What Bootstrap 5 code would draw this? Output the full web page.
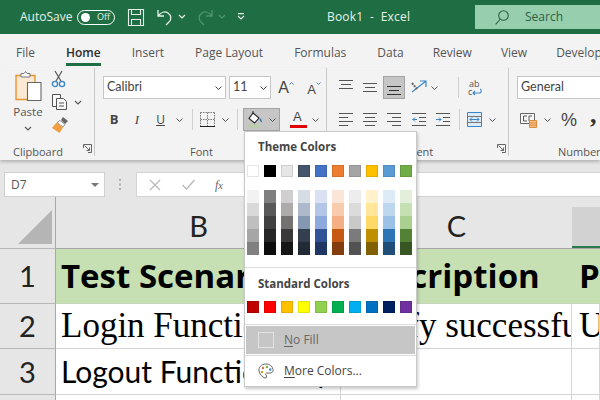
<!DOCTYPE html>
<html lang="en">
<head>
  <title>Book1 - Excel</title>
  <meta charset="utf-8">
  <meta name="viewport" content="width=device-width, initial-scale=1">
  <link href="https://cdn.jsdelivr.net/npm/bootstrap@5.3.1/dist/css/bootstrap.min.css" rel="stylesheet">
  <script src="https://cdn.jsdelivr.net/npm/bootstrap@5.3.1/dist/js/bootstrap.bundle.min.js"></script>
  <style>
    html, body { height: 400px; overflow: hidden; }
    body { font-family: "Open Sans", "Noto Sans", sans-serif; font-size: 12px; color: #444; background: #fff; position: relative; }
    svg { display: block; flex: none; overflow: visible; }

    /* small spacing helpers, the ribbon is all little offsets */
    .ml2 { margin-left: 2px; } .ml3 { margin-left: 3px; } .ml5 { margin-left: 5px; } .ml6 { margin-left: 6px; }
    .ml7 { margin-left: 7px; } .ml9 { margin-left: 9px; } .ml10 { margin-left: 10px; } .ml11 { margin-left: 11px; }
    .ml13 { margin-left: 13px; } .ml20 { margin-left: 20px; } .ml22 { margin-left: 22px; }
    .mr5 { margin-right: 5px; } .mr6 { margin-right: 6px; }
    .mt1 { margin-top: 1px; } .mt3 { margin-top: 3px; } .mt6 { margin-top: 6px; } .mt7 { margin-top: 7px; } .mt9 { margin-top: 9px; }
    .mt10 { margin-top: 10px; } .mt11 { margin-top: 11px; } .mt12 { margin-top: 12px; } .mt13 { margin-top: 13px; } .up6 { margin-top: -6px; } .down6 { margin-top: 6px; } .up9 { margin-top: -9px; }
    .w14 { width: 14px; } .w15 { width: 15px; } .w16 { width: 16px; } .w20 { width: 20px; } .w22 { width: 22px; } .w23 { width: 23px; } .w24 { width: 24px; }
    .w26 { width: 26px; } .w28 { width: 28px; } .w30 { width: 30px; } .w37 { width: 37px; }

    /* title bar */
    .title-bar { height: 34px; background: #1f6e43; color: #e6f1ea; padding-left: 20px; }
    .title-bar .auto { width: 57px; font-size: 12px; }
    .toggle { width: 38px; height: 15px; border: 1px solid #fff; border-radius: 8px; font-size: 9px; padding: 0 4px 0 3px; margin-right: 13px; }
    .knob { width: 9px; height: 9px; border-radius: 50%; background: #fff; }
    .book { width: 148px; margin-left: 82px; font-size: 12px; letter-spacing: .2px; }
    .search-box { width: 125px; height: 24px; background: #97cfae; color: #2f5f45; font-size: 12px; padding-left: 20px; gap: 16px; }

    /* tabs */
    .tab-row { height: 34px; background: #f3f3f3; font-size: 12px; color: #555; padding: 4px 0 0 16px; gap: 31px; white-space: nowrap; }
    .tab-item { flex: none; height: 30px; line-height: 30px; position: relative; }
    .tab-tight { margin-left: -2px; }
    .tab-on { color: #2c2c2c; font-weight: 600; }
    .tab-on::after { content: ""; position: absolute; left: 0; right: 0; bottom: 2px; height: 3px; background: #1f6e43; }

    /* ribbon */
    .ribbon { height: 92px; background: #f3f3f3; box-shadow: 0 2px 3px rgba(0,0,0,.22); position: relative; z-index: 1; }
    .rgroup { flex: none; height: 88px; border-right: 1px solid #c8c8c8; position: relative; padding-top: 8px; }
    .rg-clip { width: 95px; padding-top: 0; }
    .rg-font { width: 232px; }
    .rg-align { width: 182px; }
    .rg-num { flex: 1 1 auto; min-width: 0; padding: 8px 0 0 8px; }
    .rrow { display: flex; align-items: center; height: 23px; }
    .rpad8 { padding-left: 8px; }
    .rpad12 { padding-left: 12px; }
    .rpad3 { padding-left: 3px; }
    .rlabel { font-size: 11px; color: #555; text-align: center; line-height: 14px; margin-top: 14px; white-space: nowrap; }
    .lab-clip { padding-right: 18px; margin-top: 7px; }
    .lab-font { padding-right: 18px; }
    .lab-align { text-align: left; padding-left: 54px; }
    .lab-num { text-align: left; padding-left: 41px; }
    .launcher { position: absolute; bottom: 3px; right: 2px; }
    .ibox { flex: none; display: flex; align-items: center; justify-content: center; height: 23px; }
    .combo { flex: none; height: 23px; background: #fff; border: 1px solid #c6c6c6; color: #444; font-size: 12.5px; padding: 0 3px; display: flex; align-items: center; justify-content: space-between; font-family: "Lato", sans-serif; }
    .combo-font { width: 123px; }
    .combo-size { width: 42px; margin-left: 3px; }
    .combo-fmt { width: 110px; border-right: 0; }
    .vsep { flex: none; width: 1px; height: 21px; background: #d0d0d0; }
    .on-grey { background: #c6c6c6; border: 1px solid #a3a3a3; }
    .glyph { font-family: "Liberation Sans", sans-serif; color: #444; line-height: 1; }
    .g-big { font-size: 16px; }
    .g-small { font-size: 13px; margin-top: 3px; }
    .g-bold { font-family: "Open Sans", sans-serif; font-weight: 700; font-size: 13px; }
    .g-ital { font-family: "Liberation Serif", serif; font-style: italic; font-size: 13px; }
    .g-und { font-family: "Open Sans", sans-serif; font-size: 12px; }
    .g-pct { font-size: 18px; width: 29px; margin-left: 10px; }
    .g-comma { font-family: "Liberation Serif", serif; font-weight: 700; font-size: 26px; line-height: 14px; color: #333; height: 23px; }
    .fontcol { padding-left: 3px; }
    .fontcol .glyph { font-size: 13px; margin: -6px -3px 0 -14px; width: 11px; }
    .fillbtn { width: 37px; gap: 6px; }
    .wrapbtn { flex-direction: column; align-items: flex-start; width: 26px; font-size: 9px; line-height: 8px; color: #555; }
    .wrapbtn .ab { padding-left: 1px; }
    .paste-area { height: 70px; padding-top: 3px; }
    .paste-col { width: 38px; margin-left: 9px; }
    .paste-word { font-size: 11.5px; line-height: 14px; color: #555; margin-top: 3px; }
    .clip-col { width: 38px; margin-left: 5px; }

    /* formula bar */
    .fbar { height: 37px; background: #e6e6e6; padding: 12px 0 0 4px; }
    .namebox { width: 101px; height: 25px; background: #fff; border: 1px solid #d0d0d0; padding: 0 5px 0 6px; color: #555; font-size: 12px; }
    .fdots { width: 31px; }
    .fbox { height: 25px; background: #fff; border: 1px solid #d4d4d4; border-right: 0; }
    .fx { margin-left: 20px; font-family: "Liberation Serif", serif; font-style: italic; font-size: 12px; color: #666; }

    /* sheet */
    .sheet { display: grid; grid-template-columns: 56px 285px 231px 1fr; grid-template-rows: 52px 55px 45px 46px 20px; }
    .cell { overflow: hidden; white-space: nowrap; border-right: 1px solid #d4d4d4; border-bottom: 1px solid #d4d4d4; color: #000; display: flex; align-items: center; padding-left: 5px; }
    .hcol { background: #e6e6e6; border-right: 0; border-bottom: 1px solid #a8a8a8; align-items: flex-end; justify-content: center; padding: 0 0 3px; font-family: "Lato", sans-serif; font-size: 29px; line-height: 38px; color: #222; }
    .hrow { background: #e6e6e6; border-right: 1px solid #a8a8a8; border-bottom: 1px solid #b8b8b8; justify-content: center; padding: 0; font-family: "Lato", sans-serif; font-size: 29px; color: #222; }
    .hcorner { align-items: flex-end; padding: 0 3px 4px 0; justify-content: flex-end; }
    .hsel-wrap { background: #e6e6e6; padding-top: 10px; overflow: hidden; border-bottom: 1px solid #a8a8a8; }
    .hsel { background: #d2d2d2; height: 41px; border-bottom: 2px solid #2d7a4f; }
    .hdr-cell { background: #c6e0b4; font-family: "Open Sans", sans-serif; font-weight: 700; font-size: 33px; border-right-color: #c6e0b4; border-bottom-color: #c6d6bc; }
    .desc-cell { padding-left: 9px; }
    .verify-cell { padding-left: 8px; }
    .d-cell { padding-left: 7px; }
    .serif-cell { font-family: "Liberation Serif", serif; font-size: 35px; }
    .calibri-cell { font-family: "Lato", sans-serif; font-size: 30px; }

    /* fill colour menu */
    .fill-menu { position: absolute; left: 244px; top: 131px; width: 173px; height: 256px; background: #fff; border: 1px solid #c9c9c9; box-shadow: 1px 2px 3px rgba(0,0,0,.22); z-index: 5; color: #444; }
    .mhead { font-weight: 700; font-size: 11.5px; line-height: 16px; padding: 8px 0 0 13px; color: #444; }
    .mhead-first { padding-top: 7px; }
    .swatches { display: grid; grid-template-columns: repeat(10, 12px); column-gap: 5px; padding-left: 2px; }
    .swatch { height: 12px; border: 1px solid rgba(0,0,0,.1); }
    .tint { height: 13px; }
    .mline { height: 1px; background: #dcdcdc; }
    .mitem { height: 28px; margin: 1px 1px 0; padding-left: 12px; gap: 10px; font-size: 12px; color: #444; }
    .mitem u { text-underline-offset: 2px; }
    .mitem-on { background: #c6c6c6; color: #666; }
    .nofill { width: 16px; height: 16px; border: 1px solid #e2e2e2; }
  </style>
</head>
<body>

<!-- title bar -->
<div class="title-bar d-flex align-items-center">
  <div class="auto">AutoSave</div>
  <div class="toggle d-flex align-items-center justify-content-between"><span class="knob"></span><span>Off</span></div>
  <svg width="16" height="17" viewBox="0 0 16 17" fill="none" stroke="#e6f1ea" stroke-width="1.1"><path d="M.5.5h15v16H.5zM3.5.5v5h9v-5M3.5 16.5v-6h9v6"/></svg>
  <svg class="ml13" width="16" height="17" viewBox="0 0 16 17" fill="none" stroke="#e6f1ea" stroke-width="1.3"><path d="M1 1v6h6M1 7c3-4 7-5 10-3s4 6 1 9l-3 3"/></svg>
  <svg width="24" height="6" viewBox="0 0 24 6" fill="none" stroke="#e6f1ea" stroke-width="1.2"><path d="M6 1l3 3 3-3"/></svg>
  <svg width="16" height="17" viewBox="0 0 16 17" fill="none" stroke="#4f9470" stroke-width="1.3"><path d="M15 1v6H9M15 7c-3-4-7-5-10-3S1 10 4 13l3 3"/></svg>
  <svg width="24" height="6" viewBox="0 0 24 6" fill="none" stroke="#4f9470" stroke-width="1.2"><path d="M6 1l3 3 3-3"/></svg>
  <svg width="8" height="8" viewBox="0 0 8 8" fill="none" stroke="#e6f1ea" stroke-width="1.2"><path d="M1 .6h6M1 3l3 3 3-3"/></svg>
  <div class="book">Book1 &nbsp;-&nbsp; Excel</div>
  <div class="search-box d-flex align-items-center">
    <svg width="14" height="15" viewBox="0 0 14 15" fill="none" stroke="#2f5f45" stroke-width="1.1"><circle cx="8.5" cy="5.5" r="4.8"/><path d="M5 9.5L.6 14.3"/></svg>
    <span>Search</span>
  </div>
</div>

<!-- tabs -->
<div class="tab-row d-flex">
  <div class="tab-item">File</div>
  <div class="tab-item tab-on">Home</div>
  <div class="tab-item">Insert</div>
  <div class="tab-item">Page Layout</div>
  <div class="tab-item">Formulas</div>
  <div class="tab-item">Data</div>
  <div class="tab-item tab-tight">Review</div>
  <div class="tab-item tab-tight">View</div>
  <div class="tab-item tab-tight">Develop</div>
</div>

<!-- ribbon -->
<div class="ribbon d-flex">
  <!-- clipboard -->
  <div class="rgroup rg-clip">
    <div class="paste-area d-flex">
      <div class="paste-col d-flex flex-column align-items-center">
        <svg width="28" height="31" viewBox="0 0 28 31" fill="none"><path d="M2 4.500h19v24H2z" fill="#fbe9d3" stroke="#e8952f" stroke-width="1.4"/><path d="M7 4.500V2.500h3l1.500-2 1.500 2h3v3.500H7z" fill="#fff" stroke="#777"/><path d="M13.500 11.500h13.500v18H13.500z" fill="#fff" stroke="#666" stroke-width="1.1"/></svg>
        <div class="paste-word">Paste</div>
        <svg class="mt7" width="8" height="5" viewBox="0 0 8 5" fill="none" stroke="#555" stroke-width="1.1"><path d="M1 1l3 3 3-3"/></svg>
      </div>
      <div class="clip-col d-flex flex-column">
        <svg width="13" height="17" viewBox="0 0 13 17" fill="none"><path d="M3 0l6 10M10 0L4 10" stroke="#555" stroke-width="1.2"/><circle cx="3" cy="13" r="2.600" stroke="#3b86c9" stroke-width="1.400"/><circle cx="10" cy="13" r="2.600" stroke="#3b86c9" stroke-width="1.400"/></svg>
        <div class="d-flex align-items-center mt6">
          <svg width="16" height="16" viewBox="0 0 16 16" fill="#f8f8f8" stroke="#555" stroke-width="1"><path d="M.5.500h8v12h-8z"/><path d="M4.500 4.500h7l3 3v8h-10z"/><path d="M7 9h5M7 12h5" fill="none"/></svg>
          <svg class="ml6" width="8" height="5" viewBox="0 0 8 5" fill="none" stroke="#555" stroke-width="1.1"><path d="M1 1l3 3 3-3"/></svg>
        </div>
        <svg class="mt7" width="17" height="16" viewBox="0 0 17 16"><path d="M11 0l5 4-3 3-4-4z" fill="#666"/><path d="M8 3.500l5 4-2 2.500-6-4.500z" fill="#fff" stroke="#777" stroke-width=".8"/><path d="M4.500 5.500l6.500 5-3.500 5.500L0 11z" fill="#f0a040"/></svg>
      </div>
    </div>
    <div class="rlabel lab-clip">Clipboard</div>
    <svg class="launcher" width="9" height="9" viewBox="0 0 9 9" fill="none" stroke="#666"><path d="M.5 4V.5h8v8H5M1.500 1.500l5 5M3.500 6.500h3v-3"/></svg>
  </div>

  <!-- font -->
  <div class="rgroup rg-font">
    <div class="rrow rpad8">
      <div class="combo combo-font">Calibri<svg width="7" height="4" viewBox="0 0 7 4" fill="none" stroke="#444"><path d="M.5.500l3 3 3-3"/></svg></div>
      <div class="combo combo-size">11<svg width="7" height="4" viewBox="0 0 7 4" fill="none" stroke="#444"><path d="M.5.500l3 3 3-3"/></svg></div>
      <div class="ibox w30"><span class="glyph g-big">A</span><svg class="up9" width="5" height="3" viewBox="0 0 5 3" fill="none" stroke="#3b86c9"><path d="M.5 2.500l2-2 2 2"/></svg></div>
      <div class="ibox w26"><span class="glyph g-small">A</span><svg class="up9" width="5" height="3" viewBox="0 0 5 3" fill="none" stroke="#3b86c9"><path d="M.5.500l2 2 2-2"/></svg></div>
    </div>
    <div class="rrow rpad8 mt9">
      <div class="ibox glyph g-bold w22">B</div>
      <div class="ibox glyph g-ital w24">I</div>
      <div class="ibox glyph g-und w23"><u>U</u></div>
      <div class="ibox w14"><svg width="7" height="4" viewBox="0 0 7 4" fill="none" stroke="#555"><path d="M.5.500l3 3 3-3"/></svg></div>
      <div class="vsep ml6 mr6"></div>
      <div class="ibox w16"><svg width="15" height="15" viewBox="0 0 15 15" fill="none" stroke="#777" stroke-dasharray="1.500 1"><path d="M.5.500h14M.5 7.500h14M.5.500v14M7.500.500v14M14.500.500v14"/><path d="M0 14.500h15" stroke="#222" stroke-dasharray="none"/></svg></div>
      <div class="ibox w20"><svg width="7" height="4" viewBox="0 0 7 4" fill="none" stroke="#555"><path d="M.5.500l3 3 3-3"/></svg></div>
      <div class="vsep ml2 mr5"></div>
      <div class="ibox on-grey fillbtn">
        <svg width="15" height="17" viewBox="0 0 15 17" fill="none"><path d="M5 2l6 5-4.500 5L1 7.500z" fill="#fff" stroke="#222" stroke-width="1.100"/><path d="M5 2V0" stroke="#222"/><path d="M12 8c1 1.500 1.500 2.500 1 3" stroke="#2e75b6" stroke-width="1.500"/><path d="M0 15h11" stroke="#b8cfa8" stroke-width="3"/></svg>
        <svg width="7" height="4" viewBox="0 0 7 4" fill="none" stroke="#555"><path d="M.5.500l3 3 3-3"/></svg>
      </div>
      <div class="ibox w28 fontcol"><svg width="17" height="17" viewBox="0 0 17 17"><path d="M0 14h17v3H0z" fill="#e00000"/></svg><span class="glyph">A</span></div>
      <div class="ibox w15"><svg width="7" height="4" viewBox="0 0 7 4" fill="none" stroke="#555"><path d="M.5.500l3 3 3-3"/></svg></div>
    </div>
    <div class="rlabel lab-font">Font</div>
  </div>

  <!-- alignment -->
  <div class="rgroup rg-align">
    <div class="rrow rpad12">
      <svg class="up6" width="14" height="10" viewBox="0 0 14 10" stroke="#555"><path d="M0 .5h14M2 4.500h10M0 8.500h14"/></svg>
      <svg class="ml10" width="14" height="10" viewBox="0 0 14 10" stroke="#555"><path d="M0 .5h14M2 4.500h10M0 8.500h14"/></svg>
      <div class="ibox on-grey w22 ml6"><svg class="down6" width="14" height="10" viewBox="0 0 14 10" stroke="#333"><path d="M0 .5h14M2 4.500h10M0 8.500h14"/></svg></div>
      <svg class="ml6" width="17" height="15" viewBox="0 0 17 15" fill="none"><path d="M1 12L15 1M9 1h6v6" stroke="#3b86c9" stroke-width="1.200"/><path d="M1 3l5 6" stroke="#666" stroke-width="2" stroke-dasharray="2 1"/></svg>
      <svg class="ml3" width="7" height="4" viewBox="0 0 7 4" fill="none" stroke="#555"><path d="M.5.500l3 3 3-3"/></svg>
      <div class="vsep ml20"></div>
      <div class="ibox wrapbtn ml9">
        <span class="ab">ab</span>
        <span class="d-flex align-items-center">c<svg width="10" height="8" viewBox="0 0 10 8" fill="none" stroke="#3b86c9" stroke-width="1.100"><path d="M1 5h7c1.500 0 1.500-4 0-4M3 3L1 5l2 2"/></svg></span>
      </div>
    </div>
    <div class="rrow rpad12 mt9">
      <svg width="14" height="13" viewBox="0 0 14 13" stroke="#555"><path d="M0 .5h14M0 4.500h9M0 8.500h14M0 12.500h9"/></svg>
      <svg class="ml10" width="14" height="13" viewBox="0 0 14 13" stroke="#555"><path d="M0 .5h14M2 4.500h10M0 8.500h14M2 12.500h10"/></svg>
      <svg class="ml10" width="14" height="13" viewBox="0 0 14 13" stroke="#555"><path d="M0 .5h14M5 4.500h9M0 8.500h14M5 12.500h9"/></svg>
      <svg class="ml11" width="14" height="13" viewBox="0 0 14 13" fill="none"><path d="M0 .5h14M7 4.500h7M7 8.500h7M0 12.500h14" stroke="#555"/><path d="M5 6.500H.5M3 4.500l-2 2 2 2" stroke="#3b86c9"/></svg>
      <svg class="ml10" width="14" height="13" viewBox="0 0 14 13" fill="none"><path d="M0 .5h14M7 4.500h7M7 8.500h7M0 12.500h14" stroke="#555"/><path d="M0 6.500h5M3 4.500l2 2-2 2" stroke="#3b86c9"/></svg>
      <div class="vsep ml9"></div>
      <svg class="ml7" width="15" height="15" viewBox="0 0 15 15" fill="#dcebf7" stroke="#3b86c9"><path d="M.5.500h14v14H.5z"/><path d="M.5 4.500h14M.5 10.500h14" stroke="#777"/><path d="M3 7.500h9M5 5.500l-2 2 2 2M10 5.500l2 2-2 2" fill="none"/></svg>
      <svg class="ml7" width="7" height="4" viewBox="0 0 7 4" fill="none" stroke="#555"><path d="M.5.500l3 3 3-3"/></svg>
    </div>
    <div class="rlabel lab-align">Alignment</div>
    <svg class="launcher" width="9" height="9" viewBox="0 0 9 9" fill="none" stroke="#666"><path d="M.5 4V.5h8v8H5M1.500 1.500l5 5M3.500 6.500h3v-3"/></svg>
  </div>

  <!-- number -->
  <div class="rg-num">
    <div class="rrow"><div class="combo combo-fmt">General</div></div>
    <div class="rrow rpad3 mt9">
      <svg width="17" height="16" viewBox="0 0 17 16" fill="none"><path d="M.5 1.500h14v10H.5z" fill="#f8f8f8" stroke="#666"/><path d="M7 4H3.500v5H7M12 4H9v5h3" stroke="#555"/><path d="M9.500 8.500h7v7h-7z" fill="#f7c18e" stroke="#e08a38"/><path d="M9.500 11h7M9.500 13.200h7" stroke="#e08a38"/></svg>
      <svg class="ml7" width="7" height="4" viewBox="0 0 7 4" fill="none" stroke="#555"><path d="M.5.500l3 3 3-3"/></svg>
      <span class="glyph g-pct">%</span>
      <span class="g-comma">,</span>
    </div>
    <div class="rlabel lab-num">Number</div>
  </div>
</div>

<!-- formula bar -->
<div class="fbar d-flex">
  <div class="namebox d-flex align-items-center justify-content-between"><span>D7</span><svg width="8" height="4" viewBox="0 0 8 4" fill="#777"><path d="M0 0h8L4 4z"/></svg></div>
  <div class="fdots d-flex align-items-center justify-content-center"><svg width="3" height="11" viewBox="0 0 3 11" fill="#b0b0b0"><path d="M0 0h2v2H0zM0 4.500h2v2H0zM0 9h2v2H0z"/></svg></div>
  <div class="fbox flex-grow-1 d-flex align-items-center">
    <svg class="ml13" width="10" height="10" viewBox="0 0 10 10" stroke="#bbb" stroke-width="1.300"><path d="M0 0l10 10M10 0L0 10"/></svg>
    <svg class="ml22" width="13" height="10" viewBox="0 0 13 10" fill="none" stroke="#bbb" stroke-width="1.500"><path d="M.5 5l4 4 8-9"/></svg>
    <span class="fx">f<small>x</small></span>
  </div>
</div>

<!-- sheet -->
<div class="sheet">
  <div class="cell hrow hcorner"><svg width="34" height="34" viewBox="0 0 34 34" fill="#b5b5b5"><path d="M34 0v34H0z"/></svg></div>
  <div class="cell hcol">B</div>
  <div class="cell hcol">C</div>
  <div class="hsel-wrap"><div class="hsel"></div></div>

  <div class="cell hrow">1</div>
  <div class="cell hdr-cell">Test Scenario</div>
  <div class="cell hdr-cell desc-cell">Description</div>
  <div class="cell hdr-cell d-cell">Pass</div>

  <div class="cell hrow">2</div>
  <div class="cell serif-cell">Login Functionality</div>
  <div class="cell serif-cell verify-cell">Verify successful login</div>
  <div class="cell serif-cell d-cell">User</div>

  <div class="cell hrow">3</div>
  <div class="cell calibri-cell">Logout Functionality</div>
  <div class="cell"></div>
  <div class="cell"></div>

  <div class="cell hrow"></div>
  <div class="cell"></div>
  <div class="cell"></div>
  <div class="cell"></div>
</div>

<!-- fill colour dropdown -->
<div class="fill-menu">
  <div class="mhead mhead-first">Theme Colors</div>
  <div class="swatches mt10" id="themeRow"></div>
  <div class="swatches mt13" id="tintRows"></div>
  <div class="mline mt12"></div>
  <div class="mhead">Standard Colors</div>
  <div class="swatches mt9" id="stdRow"></div>
  <div class="mline mt11"></div>
  <div class="mitem mitem-on d-flex align-items-center"><span class="nofill"></span><span><u>N</u>o Fill</span></div>
  <div class="mline mt1"></div>
  <div class="mitem d-flex align-items-center">
    <svg width="16" height="16" viewBox="0 0 16 16" fill="none"><path d="M8 1C3 1 .5 4.500 1 8c.5 3 3 6 6 7 2 .5 2-2 1-3s0-2.500 2-2c3 .5 5.500-.5 5-3.500C14.500 3 11.500 1 8 1z" stroke="#666"/><circle cx="5" cy="5" r="1.200" fill="#e06c3a"/><circle cx="9" cy="4" r="1.200" fill="#70ad47"/><circle cx="12.200" cy="6.500" r="1.200" fill="#3b86c9"/><circle cx="4" cy="9" r="1.200" fill="#c9a227"/></svg>
    <span><u>M</u>ore Colors...</span>
  </div>
</div>

<script>
// office palette: base colours, then the five tints of each column
const theme = ["#ffffff","#000000","#e7e6e6","#44546a","#4472c4","#ed7d31","#a5a5a5","#ffc000","#5b9bd5","#70ad47"];
const tints = [
  ["#f2f2f2","#7f7f7f","#d0cece","#d6dce4","#d9e1f2","#fce4d6","#ededed","#fff2cc","#ddebf7","#e2efda"],
  ["#d9d9d9","#595959","#aeaaaa","#adb9ca","#b4c6e7","#f8cbad","#dbdbdb","#ffe699","#bdd7ee","#c6e0b4"],
  ["#bfbfbf","#404040","#757171","#8497b0","#8ea9db","#f4b084","#c9c9c9","#ffd966","#9bc2e6","#a9d08e"],
  ["#a6a6a6","#262626","#3a3838","#333f4f","#305496","#c65911","#7b7b7b","#bf8f00","#2f75b5","#548235"],
  ["#808080","#0d0d0d","#171616","#222b35","#203764","#833c0c","#525252","#806000","#1f4e78","#375623"]
];
const standard = ["#c00000","#ff0000","#ffc000","#ffff00","#92d050","#00b050","#00b0f0","#0070c0","#002060","#7030a0"];

function addSwatches(id, colours, cls) {
  const box = document.getElementById(id);
  colours.forEach(c => {
    const d = document.createElement("div");
    d.className = cls;
    d.style.background = c;
    box.appendChild(d);
  });
}
addSwatches("themeRow", theme, "swatch");
tints.forEach(row => addSwatches("tintRows", row, "tint"));
addSwatches("stdRow", standard, "swatch");
</script>
</body>
</html>
